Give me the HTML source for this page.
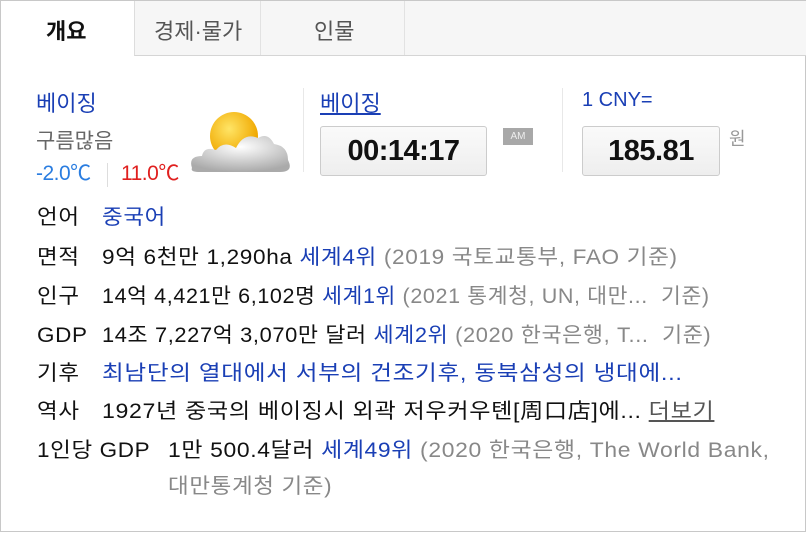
<!DOCTYPE html>
<html><head><meta charset="utf-8"><style>
*{margin:0;padding:0;box-sizing:border-box}
body{width:810px;height:533px;background:#fff;font-family:"Liberation Sans","Noto Sans CJK KR",sans-serif;position:relative;overflow:hidden;color:#111}
.a{position:absolute;white-space:nowrap}
.b{color:#1a3fb5}
.g{color:#888}
.row{position:absolute;left:102px;font-size:21px;white-space:nowrap;letter-spacing:0.6px;line-height:24px;transform-origin:0 0}
.lb{position:absolute;left:37px;font-size:21px;white-space:nowrap;letter-spacing:0.6px;line-height:24px;transform:scaleX(1.07);transform-origin:0 0}
</style></head><body>
<div class="a" style="left:0;top:0;width:806px;height:532px;border:1px solid #c8c8c8;border-top:none"></div>
<div class="a" style="left:134px;top:0;width:672px;height:56px;background:#f6f6f6;border-bottom:1px solid #d5d5d5;border-left:1px solid #ddd"></div>
<div class="a" style="left:260px;top:0;width:1px;height:55px;background:#e2e2e2"></div>
<div class="a" style="left:404px;top:0;width:1px;height:55px;background:#e2e2e2"></div>
<div class="a" style="left:806px;top:0;width:4px;height:533px;background:#fff"></div>
<div class="a" style="left:0;top:0;width:806px;height:1px;background:#c8c8c8"></div>
<div class="a" style="left:46px;top:14px;font-size:22px;font-weight:bold">개요</div>
<div class="a" style="left:154px;top:14px;font-size:22px;color:#555">경제·물가</div>
<div class="a" style="left:314px;top:14px;font-size:22px;color:#555">인물</div>

<div class="a b" style="left:36px;top:86px;font-size:22px">베이징</div>
<div class="a" style="left:36px;top:125px;font-size:21px;color:#666">구름많음</div>
<div class="a" style="left:36px;top:157px;font-size:21px;color:#2a7de0;letter-spacing:-0.5px">-2.0℃</div>
<div class="a" style="left:107px;top:163px;width:1px;height:24px;background:#ddd"></div>
<div class="a" style="left:121px;top:157px;font-size:21px;color:#e0201f;letter-spacing:-0.5px">11.0℃</div>
<svg class="a" style="left:188px;top:110px" width="105" height="66" viewBox="0 0 105 66">
<defs><radialGradient id="s" cx="0.4" cy="0.35" r="0.6"><stop offset="0" stop-color="#ffe566"/><stop offset="1" stop-color="#f0a800"/></radialGradient>
<radialGradient id="c" cx="0.5" cy="0.3" r="0.7"><stop offset="0" stop-color="#fff"/><stop offset="1" stop-color="#aaa"/></radialGradient></defs>
<circle cx="46" cy="26" r="24" fill="url(#s)"/>
<path d="M4 58 Q0 46 14 46 Q16 36 28 40 Q36 30 48 38 Q56 22 70 28 Q80 22 86 34 Q100 36 100 50 Q106 62 92 62 L12 62 Q2 62 4 58Z" fill="url(#c)"/>
</svg>

<div class="a" style="left:303px;top:88px;width:1px;height:84px;background:#e8e8e8"></div>
<div class="a b" style="left:320px;top:86px;font-size:22px;text-decoration:underline">베이징</div>
<div class="a" style="left:320px;top:126px;width:167px;height:50px;border:1px solid #ccc;border-radius:3px;background:linear-gradient(#fafafa,#eee);font-size:29px;font-weight:bold;text-align:center;line-height:48px;letter-spacing:-0.5px">00:14:17</div>
<div class="a" style="left:503px;top:128px;width:30px;height:17px;background:#a8a8a8;color:#eee;font-size:10px;text-align:center;line-height:17px">AM</div>
<div class="a" style="left:562px;top:88px;width:1px;height:84px;background:#e8e8e8"></div>
<div class="a b" style="left:582px;top:89px;font-size:20px">1 CNY=</div>
<div class="a" style="left:582px;top:126px;width:138px;height:50px;border:1px solid #ccc;border-radius:3px;background:linear-gradient(#fafafa,#eee);font-size:29px;font-weight:bold;text-align:center;line-height:48px;letter-spacing:-0.5px">185.81</div>
<div class="a" style="left:729px;top:125px;font-size:18px;color:#999">원</div>

<div class="lb" style="top:206px">언어</div>
<div class="row" style="top:206px;transform:scaleX(1.07)"><span class="b">중국어</span></div>
<div class="lb" style="top:246px">면적</div>
<div class="row" style="top:246px;transform:scaleX(1.075)">9억 6천만 1,290ha <span class="b">세계4위</span> <span class="g">(2019 국토교통부, FAO 기준)</span></div>
<div class="lb" style="top:285px">인구</div>
<div class="row" style="top:285px;transform:scaleX(1.025)">14억 4,421만 6,102명 <span class="b">세계1위</span> <span class="g">(2021 통계청, UN, 대만...&nbsp; 기준)</span></div>
<div class="lb" style="top:324px">GDP</div>
<div class="row" style="top:324px;transform:scaleX(1.04)">14조 7,227억 3,070만 달러 <span class="b">세계2위</span> <span class="g">(2020 한국은행, T...&nbsp; 기준)</span></div>
<div class="lb" style="top:362px">기후</div>
<div class="row" style="top:362px;transform:scaleX(1.125)"><span class="b">최남단의 열대에서 서부의 건조기후, 동북삼성의 냉대에...</span></div>
<div class="lb" style="top:400px">역사</div>
<div class="row" style="top:400px;transform:scaleX(1.10)">1927년 중국의 베이징시 외곽 저우커우톈[周口店]에... <span style="color:#555;text-decoration:underline">더보기</span></div>
<div class="lb" style="top:439px">1인당 GDP</div>
<div class="row" style="top:439px;left:168px;transform:scaleX(1.09)">1만 500.4달러 <span class="b">세계49위</span> <span class="g">(2020 한국은행, The World Bank,</span></div>
<div class="row g" style="top:475px;left:168px;transform:scaleX(1.07)">대만통계청 기준)</div>
</body></html>
